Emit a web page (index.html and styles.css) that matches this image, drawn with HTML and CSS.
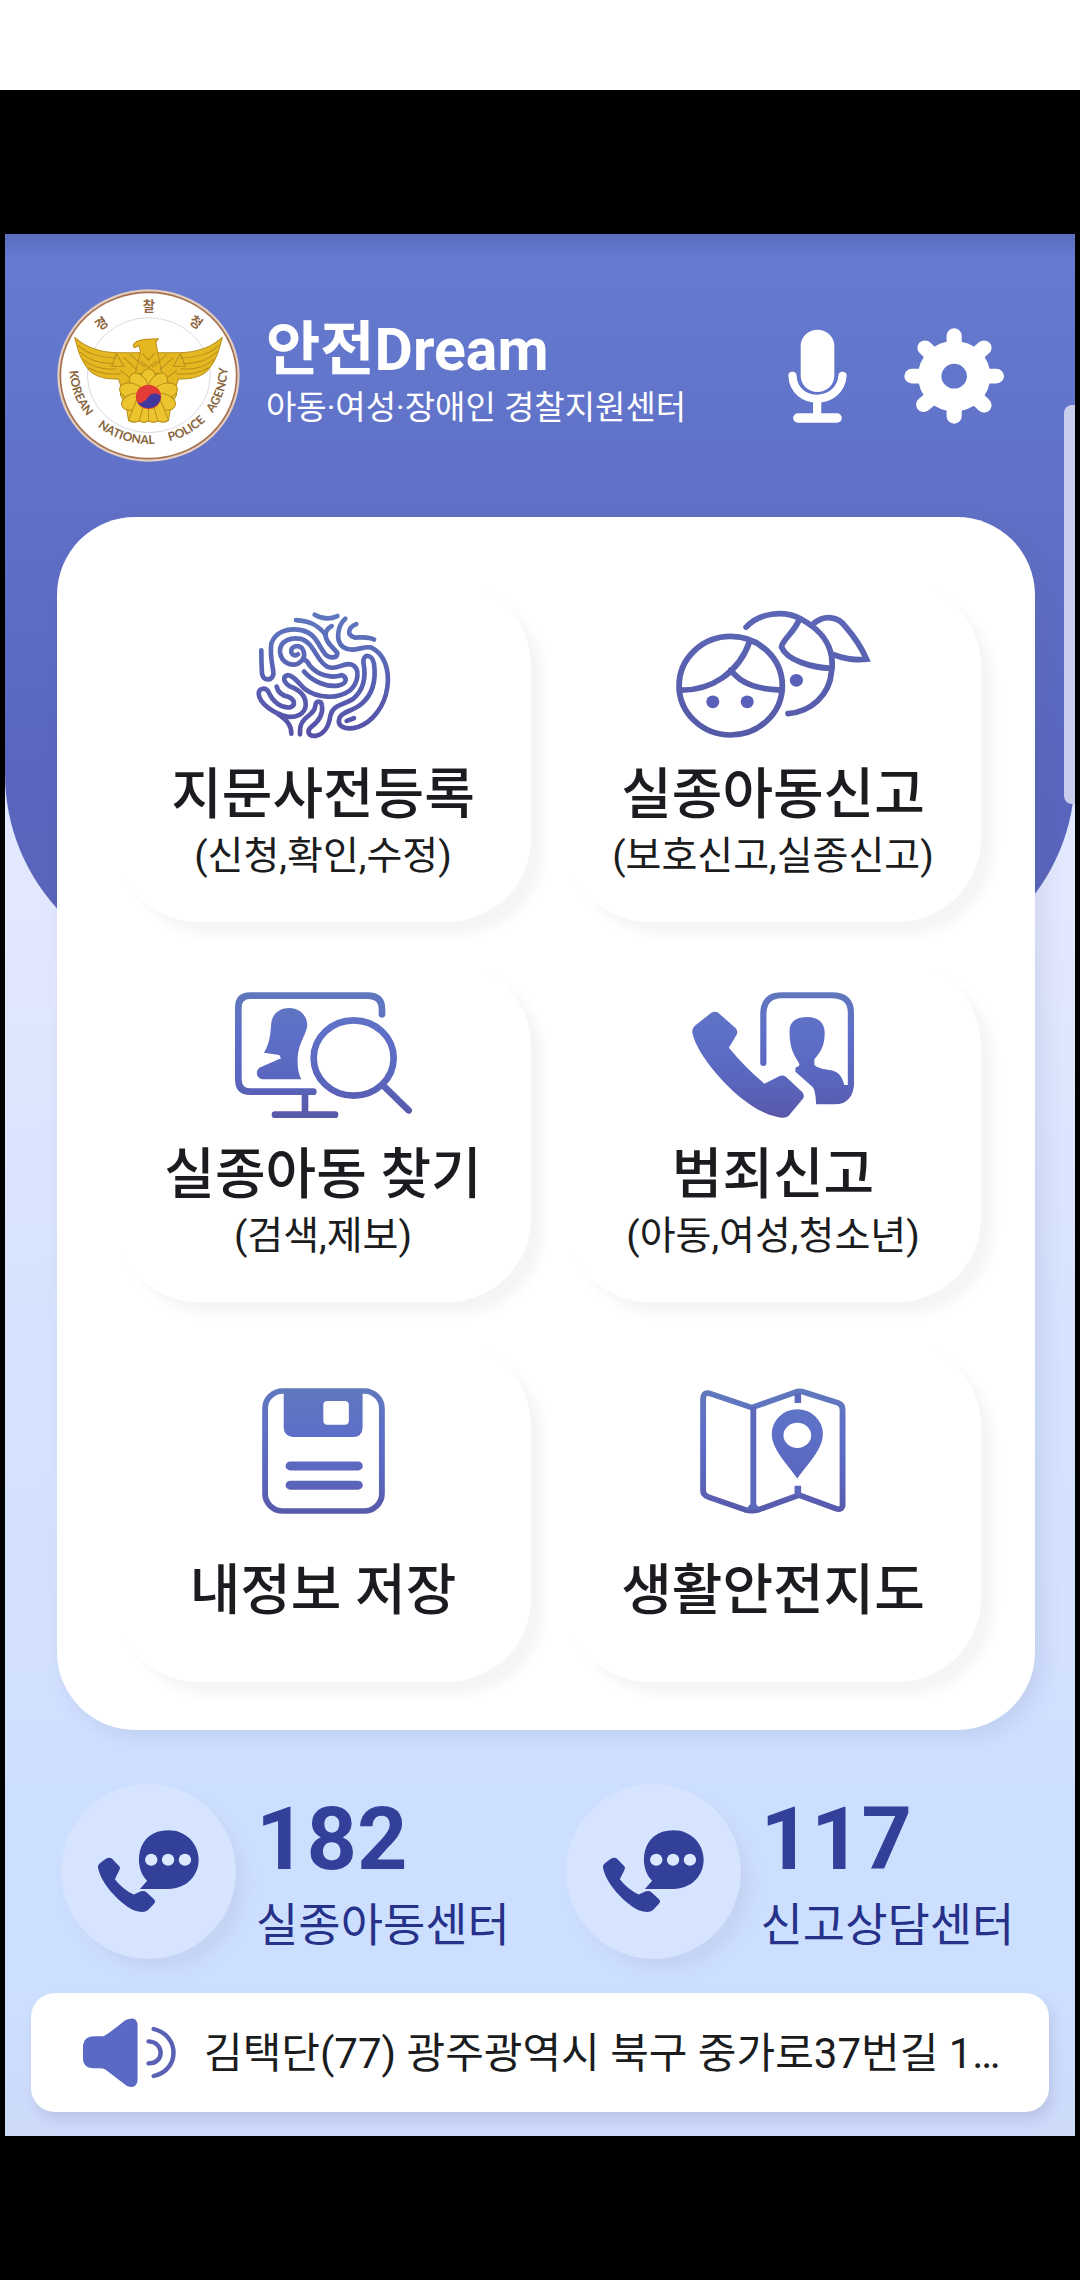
FILE: index.html
```html
<!DOCTYPE html>
<html lang="ko">
<head>
<meta charset="utf-8">
<meta name="viewport" content="width=device-width, initial-scale=1">
<title>안전Dream</title>
<link rel="stylesheet" href="styles.css">
</head>
<body>
<svg class="defs" width="0" height="0" aria-hidden="true">
  <defs>
    <linearGradient id="ink-a" gradientUnits="userSpaceOnUse" x1="0" y1="66" x2="0" y2="441"><stop offset="0" stop-color="#5f78c0"/><stop offset=".45" stop-color="#5864b4"/><stop offset="1" stop-color="#5650a8"/></linearGradient>
    <linearGradient id="ink-b" gradientUnits="userSpaceOnUse" x1="0" y1="337" x2="0" y2="713"><stop offset="0" stop-color="#5c66b6"/><stop offset="1" stop-color="#555aa8"/></linearGradient>
    <linearGradient id="ink-c" gradientUnits="userSpaceOnUse" x1="0" y1="150" x2="0" y2="530"><stop offset="0" stop-color="#6078bc"/><stop offset=".3" stop-color="#5e70c8"/><stop offset=".7" stop-color="#5a66be"/><stop offset="1" stop-color="#5858a8"/></linearGradient>
  </defs>
</svg>

<div class="status-bar"></div>
<div class="stage">
  <main class="app">
    <header class="header">
      <svg class="logo" viewBox="22 27 548 518" preserveAspectRatio="none" role="img" aria-label="경찰청">
        <ellipse cx="296" cy="286" rx="273" ry="258" fill="#e2cdc0"/>
        <ellipse cx="296" cy="286" rx="264" ry="249" fill="#fff" stroke="#a4724e" stroke-width="5"/>
        <ellipse cx="297" cy="285" rx="184" ry="172" fill="none" stroke="#c9c6d2" stroke-width="2"/>
        <g fill="#e5b822" stroke="#b8901a" stroke-width="3" stroke-linejoin="round">
          <path d="M75 172C110 205 150 216 200 218H270L322 300 290 330 215 322 206 296C165 298 130 288 112 262 90 235 84 205 75 172Z"/>
          <path d="M517 172C482 205 442 216 392 218H322L270 300 302 330 377 322 386 296C427 298 462 288 480 262 502 235 508 205 517 172Z"/>
          <path d="M250 196C256 182 270 177 326 176L318 186 323 215 336 280H256L272 215 268 196 254 203Z"/>
        </g>
        <g fill="none" stroke="#b8901a" stroke-width="3">
          <path d="M85 195C115 225 155 232 200 234M90 215C120 242 155 252 194 250M100 238C125 260 155 270 200 266M115 262C145 280 175 285 215 280M200 220L186 258H222ZM222 232L262 270M210 270L250 300M240 222L285 262"/>
          <path d="M507 195C477 225 437 232 392 234M502 215C472 242 437 252 398 250M492 238C467 260 437 270 392 266M477 262C447 280 417 285 377 280M392 220L406 258H370ZM370 232L330 270M382 270L342 300M352 222L307 262"/>
          <path d="M278 220L296 240 314 220M272 242L296 262 320 242"/>
        </g>
        <g fill="#ecc52e" stroke="#b8901a" stroke-width="3">
          <path d="M215 318L212 345 228 372 236 420Q252 430 268 422 282 430 296 422 310 430 324 422 340 430 356 420L364 372 380 345 377 318 296 270Z"/>
          <ellipse cx="296" cy="302" rx="24" ry="36"/>
          <ellipse cx="296" cy="302" rx="24" ry="36" transform="rotate(36 296 350)"/>
          <ellipse cx="296" cy="302" rx="24" ry="36" transform="rotate(-36 296 350)"/>
          <ellipse cx="296" cy="298" rx="24" ry="38" transform="rotate(72 296 350)"/>
          <ellipse cx="296" cy="298" rx="24" ry="38" transform="rotate(-72 296 350)"/>
          <ellipse cx="296" cy="302" rx="24" ry="36" transform="rotate(108 296 350)"/>
          <ellipse cx="296" cy="302" rx="24" ry="36" transform="rotate(-108 296 350)"/>
          <path d="M262 355L236 420Q252 430 268 422 282 430 296 422 310 430 324 422 340 430 356 420L330 355Z"/>
          <path d="M280 380L268 422M296 385V422M312 380L324 422"/>
        </g>
        <ellipse cx="296" cy="350" rx="38" ry="36" fill="#e23a35"/>
        <path d="M260 362C270 376 288 364 296 350 305 338 325 336 333 350A38 36 0 0 1 260 362Z" fill="#40389c"/>
        <path id="rim" d="M60 268A236 223 0 0 0 532 268" fill="none"/>
        <g class="logo-latin">
          <text><textPath href="#rim" startOffset="4">KOREAN</textPath></text>
          <text><textPath href="#rim" startOffset="196">NATIONAL</textPath></text>
          <text><textPath href="#rim" startOffset="424">POLICE</textPath></text>
          <text><textPath href="#rim" startOffset="580">AGENCY</textPath></text>
        </g>
        <g class="logo-hangul" text-anchor="middle">
          <text x="155" y="145" transform="rotate(-36 155 131)">경</text>
          <text x="297" y="94">찰</text>
          <text x="438" y="141" transform="rotate(36 438 127)">청</text>
        </g>
      </svg>
      <div class="brand">
        <h1 class="brand-name">안전Dream</h1>
        <p class="brand-sub">아동·여성·장애인 경찰지원센터</p>
      </div>
      <button class="icon-button" type="button" aria-label="음성 검색">
        <svg class="icon-mic" viewBox="718 325 172 282" preserveAspectRatio="none" fill="none" stroke="#fff" stroke-linecap="round">
          <rect x="755" y="327" width="98" height="187" rx="49" fill="#fff" stroke="none"/>
          <path d="M731 465C735 557 870 557 877 465" stroke-width="24"/>
          <path d="M803 535V585" stroke-width="24"/><path d="M747 592H861" stroke-width="28"/>
        </svg>
      </button>
      <button class="icon-button" type="button" aria-label="설정">
        <svg class="icon-gear" viewBox="1055 322 291 287" preserveAspectRatio="none" fill="none" stroke="#fff" stroke-width="44" stroke-linecap="round">
          <circle cx="1201" cy="466" r="71" stroke-width="68"/>
          <path d="M1201 386V345M1201 546V586M1121 466H1078M1281 466H1324M1258 409L1288 381M1144 409L1116 381M1258 523L1288 553M1144 523L1112 551"/>
        </svg>
      </button>
    </header>

    <section class="card">
      <button class="tile" type="button">
        <svg class="tile-icon w134" viewBox="54 66 402 375" preserveAspectRatio="none" fill="none" stroke="url(#ink-a)" stroke-width="14" stroke-linecap="round" stroke-linejoin="round">
          <path d="M230 74Q265 94 298 78"/>
          <path d="M174 90C215 92 240 105 262 133 264 160 285 170 298 188 298 205 275 205 262 192 240 165 235 130 190 120 150 112 112 125 100 160 94 205 108 235 106 252 100 272 78 272 72 250Q70 220 70 180"/>
          <path d="M281 108Q264 116 262 135"/>
          <path d="M180 192C160 204 150 174 172 168 198 164 206 196 190 212 170 232 130 222 126 185 124 150 160 140 190 146 230 158 235 215 270 230 300 240 315 215 340 222 370 232 360 280 335 300 300 325 240 325 200 295 180 275 165 255 150 254 132 258 136 275 155 287 190 300 205 320 203 345 200 370 175 380 150 378 110 370 65 340 62 310 62 290 85 290 92 305 105 335 130 352 155 350 175 345 170 325 150 318 135 315 120 305 116 288"/>
          <path d="M120 370C150 390 160 405 160 428"/>
          <path d="M198 243C225 275 270 290 300 285 330 280 328 258 310 254 280 264 240 255 215 225Q208 210 195 205"/>
          <path d="M322 86C300 105 290 150 315 170 345 190 375 165 400 172 440 190 455 240 448 290 440 350 400 395 360 408 320 420 295 405 305 380 315 360 345 362 370 340 405 310 415 270 408 220 402 190 375 190 376 215 385 260 375 300 345 325 320 342 285 340 277 375 272 410 255 430 235 434 210 438 205 420 220 408 250 385 255 365 252 345 250 328 232 330 232 345 230 365 215 370 200 385 185 400 186 415 186 430"/>
          <path d="M355 102C330 112 325 135 350 142 375 142 390 138 408 148M326 390L348 382"/>
        </svg>
        <span class="tile-title">지문사전등록</span>
        <span class="tile-note">(신청,확인,수정)</span>
      </button>

      <button class="tile" type="button">
        <svg class="tile-icon w194" viewBox="398 337 564 376" preserveAspectRatio="none" fill="none" stroke="url(#ink-b)" stroke-width="17" stroke-linecap="round">
          <ellipse cx="557" cy="557" rx="150" ry="147"/>
          <path d="M415 570C500 570 580 520 612 425M557 510C590 555 640 568 705 570"/>
          <path d="M602 382C640 340 710 330 760 357 830 395 860 450 850 515 845 585 790 635 724 640"/>
          <path d="M755 362C740 400 705 422 705 442 720 480 790 503 850 505"/>
          <path d="M800 370C830 345 870 350 890 380 920 415 940 450 952 478 920 482 880 475 858 465"/>
          <g fill="#5a5fb8" stroke="none"><circle cx="505" cy="605" r="19"/><circle cx="605" cy="605" r="19"/><circle cx="748" cy="541" r="19"/></g>
        </svg>
        <span class="tile-title">실종아동신고</span>
        <span class="tile-note">(보호신고,실종신고)</span>
      </button>

      <button class="tile" type="button">
        <svg class="tile-icon w177" viewBox="407 153 531 378" preserveAspectRatio="none" fill="none" stroke="url(#ink-c)" stroke-width="20" stroke-linecap="round">
          <path d="M848 220V205Q848 164 805 164H452Q417 164 417 200V415Q417 452 452 452H642M617 455V520M527 521H707"/>
          <ellipse cx="763" cy="351" rx="120" ry="113"/>
          <path d="M855 437L928 508"/>
          <path fill="url(#ink-c)" stroke="none" d="M494 335C515 300 513 270 516 245 520 215 545 201 570 201 605 201 628 230 623 260 615 290 597 310 595 350 594 380 598 400 606 415H490C470 412 468 390 480 380L545 352 540 342Z"/>
        </svg>
        <span class="tile-title">실종아동 찾기</span>
        <span class="tile-note">(검색,제보)</span>
      </button>

      <button class="tile" type="button">
        <svg class="tile-icon w162" viewBox="445 153 470 378" preserveAspectRatio="none">
          <path fill="url(#ink-c)" d="M500 216Q512 208 522 216L572 262Q580 272 574 282L552 320Q600 380 655 428L695 407Q708 400 718 408L764 452Q774 464 766 474L725 525Q715 534 690 527C590 505 460 350 446 275 445 262 450 258 456 252Z"/>
          <path fill="none" stroke="url(#ink-c)" stroke-width="18" stroke-linecap="round" d="M652 366V215Q655 163 705 163H850Q906 163 906 215V430"/>
          <path fill="url(#ink-c)" d="M728 270C728 240 750 228 779 228 810 228 830 245 830 275 830 320 815 335 800 355V372C815 385 835 385 850 388 875 395 880 410 887 432H897L915 425C915 465 895 490 860 490H805Q804 450 795 438L745 392V380Q755 378 757 370C745 345 728 330 728 270Z"/>
        </svg>
        <span class="tile-title">범죄신고</span>
        <span class="tile-note">(아동,여성,청소년)</span>
      </button>

      <button class="tile tile-short" type="button">
        <svg class="tile-icon w123" viewBox="765 145 357 380" preserveAspectRatio="none" fill="none" stroke="url(#ink-c)">
          <rect x="774" y="154" width="339" height="362" rx="52" stroke-width="17"/>
          <path fill="url(#ink-c)" stroke="none" d="M828 150H1057V265Q1055 293 1030 293H855Q828 290 828 265Z"/>
          <rect x="943" y="184" width="74" height="72" rx="12" fill="#fff" stroke="none"/>
          <path d="M847 380H1044M847 438H1044" stroke-width="27" stroke-linecap="round"/>
        </svg>
        <span class="tile-title">내정보 저장</span>
      </button>

      <button class="tile tile-short" type="button">
        <svg class="tile-icon w146" viewBox="470 145 423 380" preserveAspectRatio="none" fill="none" stroke="url(#ink-c)" stroke-width="17">
          <path d="M479 178Q480 155 500 162L620 204 745 158Q757 152 770 157L870 190Q883 195 883 210V500Q880 515 862 508L757 468 640 512Q620 518 600 512L495 474Q479 468 479 455Z"/>
          <path fill="#5c68bc" stroke="none" d="M616 200H633V495L645 512H602L616 495ZM744 160H763V190H744ZM744 440H763V468H744Z"/>
          <path fill="url(#ink-c)" stroke="none" d="M752 418C720 370 678 330 678 283A74 74 0 0 1 826 283C826 330 785 370 752 418Z"/>
          <ellipse cx="752" cy="288" rx="40" ry="38" fill="#fff" stroke="none"/>
        </svg>
        <span class="tile-title">생활안전지도</span>
      </button>
    </section>

    <nav class="contacts">
      <a class="contact" href="tel:182">
        <span class="contact-badge">
          <svg class="icon-call" viewBox="283 198 294 248" preserveAspectRatio="none" fill="#32409a">
            <path d="M306 284Q316 278 324 284L345 306Q350 312 345 318L332 345Q355 375 387 391L408 381Q418 378 424 384L446 405Q452 412 446 418L428 438Q415 448 385 437C340 412 290 355 283 310 283 300 288 298 292 294Z"/>
            <path d="M405 374L426 350C385 310 392 199 488 199 540 199 576 240 576 287 576 335 540 374 488 374Z"/>
            <g fill="#dce8ff"><circle cx="438" cy="287" r="18"/><circle cx="487" cy="287" r="18"/><circle cx="536" cy="287" r="18"/></g>
          </svg>
        </span>
        <span class="contact-text"><strong class="contact-number">182</strong><span class="contact-label">실종아동센터</span></span>
      </a>
      <a class="contact" href="tel:117">
        <span class="contact-badge">
          <svg class="icon-call" viewBox="283 198 294 248" preserveAspectRatio="none" fill="#32409a">
            <path d="M306 284Q316 278 324 284L345 306Q350 312 345 318L332 345Q355 375 387 391L408 381Q418 378 424 384L446 405Q452 412 446 418L428 438Q415 448 385 437C340 412 290 355 283 310 283 300 288 298 292 294Z"/>
            <path d="M405 374L426 350C385 310 392 199 488 199 540 199 576 240 576 287 576 335 540 374 488 374Z"/>
            <g fill="#dce8ff"><circle cx="438" cy="287" r="18"/><circle cx="487" cy="287" r="18"/><circle cx="536" cy="287" r="18"/></g>
          </svg>
        </span>
        <span class="contact-text"><strong class="contact-number">117</strong><span class="contact-label">신고상담센터</span></span>
      </a>
    </nav>

    <a class="ticker" href="#notice">
      <svg class="icon-speaker" viewBox="242 773 271 207" preserveAspectRatio="none">
        <path fill="#5a69c4" d="M242 855Q245 828 275 828H300Q310 826 365 780 395 765 401 790V960Q398 988 370 977L310 930Q305 924 290 924H270Q245 922 242 900Z"/>
        <path fill="none" stroke="#5a60b4" stroke-width="13" stroke-linecap="round" d="M433 843C480 845 480 910 433 909M448 806C525 825 525 930 448 947"/>
      </svg>
      <span class="ticker-text">김택단(77) 광주광역시 북구 중가로37번길 1…</span>
    </a>
    <div class="scroll-thumb"></div>
  </main>
</div>
</body>
</html>
```
FILE: styles.css
```css
* { box-sizing: border-box; }

body {
  margin: 0;
  min-height: 100vh;
  display: flex;
  flex-direction: column;
  background: #000;
  font-family: Roboto, "Noto Sans CJK KR", sans-serif;
  color: #1a1c20;
}

button {
  margin: 0;
  padding: 0;
  border: 0;
  background: none;
  font: inherit;
  color: inherit;
}

a { color: inherit; text-decoration: none; }

svg { display: block; flex: none; overflow: visible; }

.defs { position: absolute; }

.status-bar { height: 90px; background: #fff; }

.stage { padding: 144px 5px; }

.app {
  position: relative;
  z-index: 0;
  overflow: hidden;
  padding-bottom: 24px;
  background: linear-gradient(#e2e8fd 36%, #d6e2fe 58%, #d4e1ff 74%, #cddfff 82%, #cddfff 92%, #cddafa);
}

/* Rounded blue backdrop behind the header and the top of the card */
.app::before {
  content: "";
  position: absolute;
  z-index: -1;
  top: 0;
  left: 0;
  right: 0;
  height: 740px;
  border-radius: 0 0 200px 200px;
  background: linear-gradient(#596dc0, #5f74c8 14px, #667bd0 24px, #6276cc 130px, #6070c6 280px, #5b68c0 480px, #5862b8);
}

.header {
  height: 283px;
  padding: 0 71px 0 52px;
  display: flex;
  align-items: center;
}

.logo { width: 183px; height: 173px; }

.logo-latin { font: 700 36px Lato, sans-serif; fill: #86633a; }

.logo-hangul { font: 700 40px "Noto Sans CJK KR", sans-serif; fill: #8f6844; }

.brand {
  flex: 1;
  padding: 0 0 8px 26px;
  color: #fff;
  white-space: nowrap;
}

.brand-name { margin: 0; font-size: 59px; line-height: 68px; font-weight: 700; }

.brand-sub { margin: 4px 0 0; font-size: 33px; line-height: 40px; font-weight: 400; }

.icon-button + .icon-button { margin-left: 57px; }

.icon-mic { width: 59px; height: 94px; }

.icon-gear { width: 100px; height: 96px; }

.card {
  margin: 0 40px 0 52px;
  padding: 65px 54px 48px 58px;
  display: grid;
  grid-template-columns: 1fr 1fr;
  gap: 40px 34px;
  border-radius: 78px;
  background: #fff;
  box-shadow: 8px 8px 20px rgba(80, 90, 140, .12);
}

.tile {
  height: 340px;
  padding-top: 30px;
  display: flex;
  flex-direction: column;
  align-items: center;
  justify-content: flex-start;
  border-radius: 84px;
  background: #fff;
  box-shadow: 12px 12px 12px rgba(30, 10, 40, .045);
  white-space: nowrap;
}

.tile-short { padding-top: 46px; }

.tile-icon { height: 126px; }
.w123 { width: 123px; }
.w134 { width: 134px; }
.w146 { width: 146px; }
.w162 { width: 162px; }
.w177 { width: 177px; }
.w194 { width: 194px; }

.tile-title { margin-top: 26px; font-size: 55px; line-height: 60px; font-weight: 500; }

.tile-short .tile-title { margin-top: 46px; }

.tile-note { margin-top: 8px; font-size: 39px; line-height: 48px; }

.contacts {
  height: 263px;
  padding: 54px 5px 0 56px;
  display: grid;
  grid-template-columns: 1fr 1fr;
  align-items: start;
  color: #26318a;
}

.contact { display: flex; align-items: center; gap: 20px; white-space: nowrap; }

.contact-badge {
  width: 175px;
  height: 175px;
  display: flex;
  align-items: center;
  justify-content: center;
  border-radius: 50%;
  background: #d6e4ff;
  box-shadow: 10px 12px 14px rgba(150, 140, 170, .13);
}

.icon-call { width: 101px; height: 83px; }

.contact-text { padding-top: 4px; display: flex; flex-direction: column; gap: 14px; }

.contact-number { font-size: 88px; line-height: 88px; color: #32409a; }

.contact-label { font-size: 46px; line-height: 56px; }

.ticker {
  height: 119px;
  margin: 0 26px;
  padding: 0 40px 0 52px;
  display: flex;
  align-items: center;
  gap: 28px;
  border-radius: 24px;
  background: #fff;
  box-shadow: 4px 8px 12px rgba(90, 90, 130, .15);
}

.icon-speaker { width: 93px; height: 69px; }

.ticker-text {
  min-width: 0;
  padding-top: 2px;
  overflow: hidden;
  text-overflow: ellipsis;
  white-space: nowrap;
  font-size: 42px;
  line-height: 56px;
}

.scroll-thumb {
  position: absolute;
  top: 171px;
  right: 0;
  width: 11px;
  height: 399px;
  border-radius: 8px 0 0 8px;
  background: #c8cdec;
}
```
